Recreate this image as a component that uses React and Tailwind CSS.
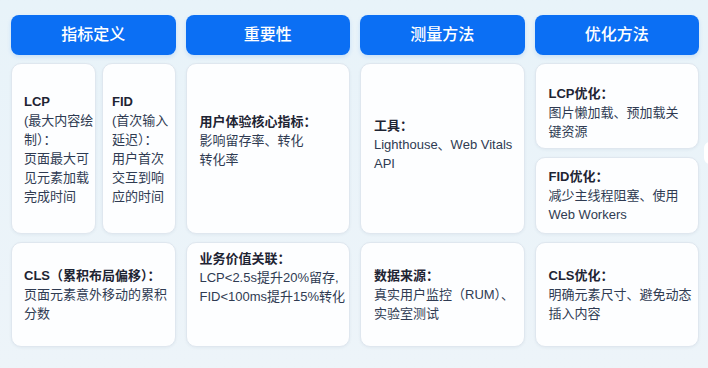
import React from "react";

const FONT = { fontFamily: '"Liberation Sans", "Noto Sans CJK SC", sans-serif' };

function Lines({ title, lines }) {
  return (
    <div className="whitespace-nowrap text-[13px] leading-[19px]">
      <div className="font-bold text-[#1e2433]">{title}</div>
      {lines.map((l, i) => (
        <div key={i} className="text-[#2f3b52]">{l}</div>
      ))}
    </div>
  );
}

function Card({ className = "", children }) {
  return (
    <div
      className={
        "flex flex-col rounded-[10px] border border-[#dfe7ef] bg-[#fdfeff] shadow-[0_1px_3px_rgba(30,60,100,0.06)] " +
        className
      }
    >
      {children}
    </div>
  );
}

function Header({ children }) {
  return (
    <div className="flex items-center justify-center rounded-[8px] bg-[#0b6ff4] text-[16px] font-medium text-white shadow-[0_2px_4px_rgba(11,111,244,0.15)]">
      {children}
    </div>
  );
}

export default function App() {
  return (
    <div
      className="relative h-[368px] w-[708px] overflow-hidden bg-gradient-to-b from-[#e8f3f9] to-[#edf4f9]"
      style={FONT}
    >
      <div className="grid grid-cols-4 grid-rows-[40px_171px_105px] gap-x-[10px] gap-y-2 pl-[11px] pr-[9px] pt-[15px]">
        <Header>指标定义</Header>
        <Header>重要性</Header>
        <Header>测量方法</Header>
        <Header>优化方法</Header>

        {/* Row 1 */}
        <div className="flex gap-[6px]">
          <Card className="w-[85px] justify-center pl-3">
            <Lines
              title="LCP"
              lines={["(最大内容绘", "制）：", "页面最大可", "见元素加载", "完成时间"]}
            />
          </Card>
          <Card className="flex-1 justify-center pl-[9px]">
            <Lines
              title="FID"
              lines={["(首次输入", "延迟）：", "用户首次", "交互到响", "应的时间"]}
            />
          </Card>
        </div>
        <Card className="justify-start pl-[13px] pt-[48px]">
          <Lines title="用户体验核心指标：" lines={["影响留存率、转化", "转化率"]} />
        </Card>
        <Card className="justify-center pb-[8px] pl-[13px]">
          <Lines title="工具：" lines={["Lighthouse、Web Vitals", "API"]} />
        </Card>
        <div className="flex flex-col gap-2">
          <Card className="h-[86px] justify-center pl-[13px] pt-[12px]">
            <Lines title="LCP优化：" lines={["图片懒加载、预加载关", "键资源"]} />
          </Card>
          <Card className="flex-1 justify-center pl-[13px]">
            <Lines title="FID优化：" lines={["减少主线程阻塞、使用", "Web Workers"]} />
          </Card>
        </div>

        {/* Row 2 */}
        <Card className="justify-center pl-3">
          <Lines title="CLS（累积布局偏移）：" lines={["页面元素意外移动的累积", "分数"]} />
        </Card>
        <Card className="justify-start pl-[13px] pt-[6px]">
          <Lines
            title="业务价值关联："
            lines={["LCP<2.5s提升20%留存,", "FID<100ms提升15%转化"]}
          />
        </Card>
        <Card className="justify-center pl-[13px]">
          <Lines title="数据来源：" lines={["真实用户监控（RUM）、", "实验室测试"]} />
        </Card>
        <Card className="justify-center pl-[13px]">
          <Lines title="CLS优化：" lines={["明确元素尺寸、避免动态", "插入内容"]} />
        </Card>
      </div>
      <div className="absolute left-[704px] top-[142px] h-[22px] w-[12px] rounded-full bg-white" />
    </div>
  );
}
